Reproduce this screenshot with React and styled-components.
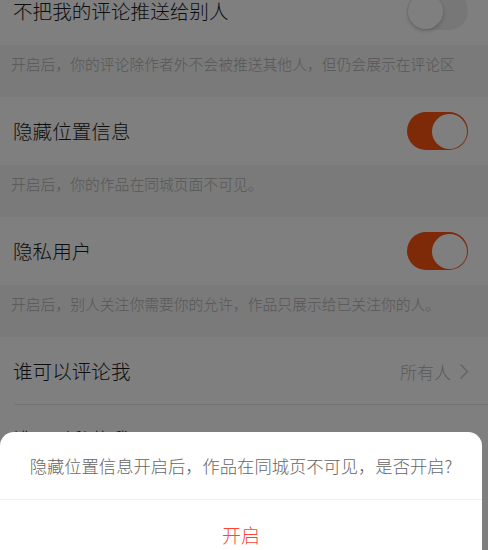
import { styled, createGlobalStyle } from 'styled-components';

const GlobalStyle = createGlobalStyle`
  html, body {
    margin: 0;
    height: 550px;
    overflow: hidden;
    background: #ffffff;
    font-family: "Noto Sans CJK SC", "Noto Sans", sans-serif;
  }
`;

const settings = [
  { title: '不把我的评论推送给别人', on: false, hint: '开启后，你的评论除作者外不会被推送其他人，但仍会展示在评论区' },
  { title: '隐藏位置信息', on: true, hint: '开启后，你的作品在同城页面不可见。' },
  { title: '隐私用户', on: true, hint: '开启后，别人关注你需要你的允许，作品只展示给已关注你的人。' },
];

const links = [
  { title: '谁可以评论我', value: '所有人', divider: true },
  { title: '谁可以私信我', value: '所有人' },
];

export default function App() {
  return (
    <>
      <GlobalStyle />
      <Page>
        {settings.map((s) => (
          <div key={s.title}>
            <Row>
              <Title>{s.title}</Title>
              <Switch $on={s.on}>
                <Knob $on={s.on} />
              </Switch>
            </Row>
            <Hint>{s.hint}</Hint>
          </div>
        ))}
        {links.map((l) => (
          <Row key={l.title} $divider={l.divider}>
            <Title>{l.title}</Title>
            <Value>
              {l.value}
              <svg width="10" height="17" viewBox="0 0 10 17" fill="none">
                <path d="M1.5 1.5 L8.5 8.5 L1.5 15.5" stroke="#c4c4c4" strokeWidth="1.4" />
              </svg>
            </Value>
          </Row>
        ))}
      </Page>
      <Mask />
      <Sheet>
        <SheetMessage>隐藏位置信息开启后，作品在同城页不可见，是否开启?</SheetMessage>
        <SheetAction>开启</SheetAction>
      </Sheet>
    </>
  );
}

const Page = styled.div`
  margin-top: -23px;
  background: #ffffff;
`;

const Row = styled.div`
  height: 68px;
  display: flex;
  align-items: center;
  justify-content: space-between;
  padding: 0 20px 0 13px;
  box-sizing: border-box;
  position: relative;

  ${({ $divider }) => $divider && `
    &::after {
      content: '';
      position: absolute;
      left: 14px;
      right: 0;
      bottom: 0;
      height: 1px;
      background: #e9e9e9;
    }
  `}
`;

const Title = styled.span`
  font-size: 19.6px;
  font-weight: 300;
  color: #1a1a1a;
  line-height: 1;
`;

const Switch = styled.div`
  width: 61px;
  height: 38px;
  border-radius: 19px;
  box-sizing: border-box;
  display: flex;
  align-items: center;
  justify-content: ${({ $on }) => ($on ? 'flex-end' : 'flex-start')};
  padding: 0 1px;
  background: ${({ $on }) => ($on ? '#fc5210' : '#eeeeee')};
`;

const Knob = styled.div`
  width: 35px;
  height: 35px;
  border-radius: 50%;
  background: #ffffff;
  box-shadow: ${({ $on }) => ($on ? 'none' : '0 2px 4px rgba(0, 0, 0, 0.2)')};
`;

const Hint = styled.div`
  height: 52px;
  box-sizing: border-box;
  padding: 10px 11px 0;
  background: #f4f4f4;
  font-size: 14.8px;
  font-weight: 300;
  line-height: 18px;
  color: #b0b0b0;
  white-space: nowrap;
`;

const Value = styled.span`
  display: flex;
  align-items: center;
  gap: 8px;
  margin-right: -1px;
  font-size: 17px;
  font-weight: 300;
  color: #b4b4b4;
`;

const Mask = styled.div`
  position: fixed;
  inset: 0;
  background: rgba(0, 0, 0, 0.5);
`;

const Sheet = styled.div`
  position: fixed;
  top: 432px;
  left: 0;
  width: 482px;
  height: 140px;
  background: #ffffff;
  border-radius: 14px 14px 0 0;
`;

const SheetMessage = styled.div`
  height: 67px;
  display: flex;
  align-items: center;
  justify-content: center;
  border-bottom: 1px solid #eeeeee;
  font-size: 17.3px;
  font-weight: 300;
  color: #666666;
  white-space: nowrap;
`;

const SheetAction = styled.div`
  height: 68px;
  display: flex;
  align-items: center;
  justify-content: center;
  font-size: 19px;
  font-weight: 300;
  color: #ff4436;
`;
